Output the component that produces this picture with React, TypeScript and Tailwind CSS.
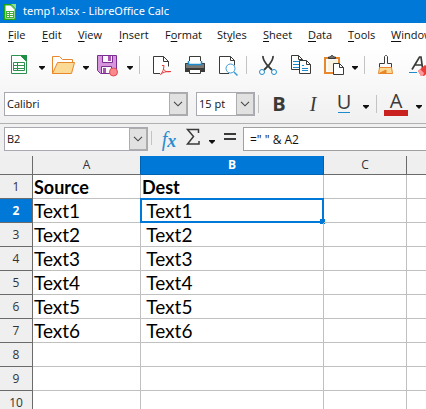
import clsx from 'clsx';
import type { ReactNode } from 'react';

const menus = [
  { label: 'File', key: 0, width: 'w-[34px]' },
  { label: 'Edit', key: 0, width: 'w-9' },
  { label: 'View', key: 0, width: 'w-[41px]' },
  { label: 'Insert', key: 0, width: 'w-[46px]' },
  { label: 'Format', key: 1, width: 'w-[52px]' },
  { label: 'Styles', key: 2, width: 'w-[46px]' },
  { label: 'Sheet', key: 0, width: 'w-[45px]' },
  { label: 'Data', key: 0, width: 'w-10' },
  { label: 'Tools', key: 0, width: 'w-[43px]' },
  { label: 'Window', key: 0, width: 'w-14' },
];

const columns = ['A', 'B', 'C', 'D'];

const rows = [
  ['Source', 'Dest'],
  ['Text1', ' Text1'],
  ['Text2', ' Text2'],
  ['Text3', ' Text3'],
  ['Text4', ' Text4'],
  ['Text5', ' Text5'],
  ['Text6', ' Text6'],
  [],
  [],
  [],
];

const selected = { row: 1, col: 1 };

function Icon({ children }: { children: ReactNode }) {
  return (
    <svg viewBox="0 0 24 24" className="w-6 h-6 block" fill="none" aria-hidden="true">
      {children}
    </svg>
  );
}

function ToolButton({ label, children }: { label: string; children: ReactNode }) {
  return (
    <button type="button" aria-label={label} className="w-6 h-6 shrink-0 flex items-center justify-center">
      {children}
    </button>
  );
}

function Arrow({ label, className = 'w-5' }: { label: string; className?: string }) {
  return (
    <button type="button" aria-label={label} className={clsx('h-6 shrink-0 flex items-center justify-center', className)}>
      <svg viewBox="0 0 6 4" className="w-[6px] h-1 mt-1.5" aria-hidden="true">
        <path d="M0 0h6v1L3 4 0 1z" fill="#111" />
      </svg>
    </button>
  );
}

function Separator({ className }: { className?: string }) {
  return <div className={clsx('w-px shrink-0 bg-[#c3c3c3]', className)} />;
}

function DropButton({ label }: { label: string }) {
  return (
    <button
      type="button"
      aria-label={label}
      className="w-[18px] shrink-0 flex items-center justify-center bg-[#e1e1e1] border border-[#adadad]"
    >
      <svg viewBox="0 0 10 6" className="w-[10px] h-[6px]" fill="none" aria-hidden="true">
        <path d="M1 .8l4 4 4-4" stroke="#444" strokeWidth="1.1" />
      </svg>
    </button>
  );
}

function ComboBox({ label, value, className }: { label: string; value: string; className: string }) {
  return (
    <div className={clsx('h-6 shrink-0 flex bg-white border border-[#a9a9b1]', className)}>
      <input aria-label={label} defaultValue={value} className="flex-1 min-w-0 pl-[2px] bg-transparent outline-none" />
      <DropButton label={label + ' list'} />
    </div>
  );
}

function TitleBar() {
  return (
    <header className="h-[23px] shrink-0 flex items-center gap-[7px] pl-1 bg-[#0078d7] text-white">
      <svg viewBox="0 0 12 16" className="w-3 h-4" fill="none" aria-hidden="true">
        <path d="M0 0h7l5 5v11H0z" fill="#18a303" />
        <path d="M1 1h6l4 4v10H1z" fill="#fff" />
        <path d="M1 1h5.500l4.500 4.500V15H1z" stroke="#2dac27" />
        <path d="M7 0h5v5z" fill="#92e285" />
        <path d="M2 7h8v7H2z" fill="#43b135" />
        <path d="M3 8h2v1H3zM6 8h3v1H6zM3 10h2v1H3zM6 10h3v1H6zM3 12h2v1H3zM6 12h3v1H6z" fill="#fff" />
      </svg>
      <h1 className="whitespace-nowrap font-['Noto_Sans',sans-serif]">temp1.xlsx - LibreOffice Calc</h1>
    </header>
  );
}

function MenuBar() {
  return (
    <nav className="h-6 shrink-0 flex items-center pl-2 bg-white">
      {menus.map(({ label, key, width }) => (
        <button key={label} type="button" className={clsx('shrink-0 text-left', width)}>
          {label.slice(0, key)}
          <span className="underline underline-offset-2">{label[key]}</span>
          {label.slice(key + 1)}
        </button>
      ))}
    </nav>
  );
}

function StandardToolbar() {
  return (
    <div className="h-10 shrink-0 flex items-center pl-2 pb-1">
      <ToolButton label="New">
        <Icon>
          <path d="M3.500 2.500h9l6 6v12h-15z" fill="#fff" stroke="#2f9150" />
          <path d="M12 2h7v7z" fill="#1d9046" />
          <path d="M5.500 9.500h11v8h-11zM9.500 9.500v8M5.500 12.500h11M5.500 15.500h11" stroke="#2f9150" />
        </Icon>
      </ToolButton>
      <Arrow label="New options" />
      <ToolButton label="Open">
        <Icon>
          <path d="M.5 20.500v-17h7l3 3h10v3" fill="#fff" stroke="#e8872b" />
          <path d="M5.500 9.500h17l-3 11H.5z" fill="#fada94" stroke="#e8872b" />
        </Icon>
      </ToolButton>
      <Arrow label="Open options" />
      <ToolButton label="Save">
        <Icon>
          <path d="M1.500 2.500h19v18h-16l-3-3z" fill="#d795dc" stroke="#7b2f92" />
          <path d="M6.500 2.500h10v7h-10z" fill="#fafafa" stroke="#7b2f92" />
          <path d="M12 3h3v5h-3z" fill="#a954b5" />
          <path d="M5.500 13.500h10v7h-10z" fill="#fafafa" stroke="#7b2f92" />
          <path d="M7 15h3v5H7z" fill="#a954b5" />
          <circle cx="17.500" cy="19" r="4" fill="#fb8a8d" stroke="#dd4c55" />
        </Icon>
      </ToolButton>
      <Arrow label="Save options" className="w-[19px]" />
      <Separator className="h-[18px]" />
      <div className="flex gap-[9px] ml-[10px]">
        <ToolButton label="Export as PDF">
          <Icon>
            <path d="M10 20.500H3.500v-17h10l5 5v5M13.500 3.500v5h5" fill="#fff" stroke="#3a3a38" />
            <path d="M12 12.500h2l-.5 3.500c1 2 3 3.500 7.500 2.500M13.500 16c-.5 2-1.500 4-3 5.500M10.500 21.500c2-2 6-3.500 10-3" stroke="#e8393c" />
          </Icon>
        </ToolButton>
        <ToolButton label="Print">
          <Icon>
            <path d="M6.500 10.500v-7h11v7" fill="#fff" stroke="#3a3a38" />
            <path d="M2 10h20v9H2z" fill="#797774" />
            <path d="M2.500 18.500v-8h19v8" stroke="#3a3a38" />
            <path d="M5.500 8v3.500h13V8" fill="#fff" stroke="#1e8bcd" strokeWidth="1.500" />
            <path d="M2 15h20v4H2z" fill="#3a3a38" />
            <path d="M6.500 16.500h11v4h-11z" fill="#fff" stroke="#3a3a38" />
          </Icon>
        </ToolButton>
        <ToolButton label="Print Preview">
          <Icon>
            <path d="M13 20.500H3.500v-17h11l4 4v5M14.500 3.500v4h4" fill="#fff" stroke="#3a3a38" />
            <circle cx="14.500" cy="15.500" r="4.500" fill="#fff" stroke="#3b9bd5" />
            <path d="M18 19l3.500 3.500" stroke="#3b9bd5" strokeWidth="1.500" />
          </Icon>
        </ToolButton>
      </div>
      <Separator className="h-[18px] ml-[6px]" />
      <div className="flex gap-[9px] ml-[9px]">
        <ToolButton label="Cut">
          <Icon>
            <path d="M7 3c-.5 3 1 5 4 9l5 5M17 3c.5 3-1 5-4 9l-5 5" stroke="#3a3a38" strokeWidth="1.800" />
            <circle cx="6" cy="19" r="2.500" fill="#fff" stroke="#1e8bcd" />
            <circle cx="18" cy="19" r="2.500" fill="#fff" stroke="#1e8bcd" />
          </Icon>
        </ToolButton>
        <ToolButton label="Copy">
          <Icon>
            <path d="M2.500 2.500h7l4 4v10h-11zM9.500 2.500v4h4" fill="#fff" stroke="#3a3a38" />
            <path d="M4 8.500h6M4 11.500h6M4 14.500h6" stroke="#1e8bcd" />
            <path d="M10.500 7.500h7l4 4v9h-11zM17.500 7.500v4h4" fill="#fff" stroke="#3a3a38" />
            <path d="M13 12.500h2M13 15.500h6M13 17.500h6" stroke="#1e8bcd" />
          </Icon>
        </ToolButton>
        <ToolButton label="Paste">
          <Icon>
            <path d="M3 5h14v15H3z" fill="#fafafa" stroke="#e8872b" strokeWidth="2" />
            <path d="M6 7h9v11H6z" fill="#fbf3df" />
            <path d="M6.500 5.500V4h2c0-2 3-2 3 0h2v1.500z" fill="#797774" stroke="#3a3a38" />
            <path d="M11.500 10.500h6l4 4v7h-10zM17.500 10.500v4h4" fill="#fff" stroke="#3a3a38" />
          </Icon>
        </ToolButton>
      </div>
      <Arrow label="Paste options" className="w-[18px]" />
      <Separator className="h-[18px]" />
      <div className="flex gap-[9px] ml-[9px]">
        <ToolButton label="Clone Formatting">
          <Icon>
            <path d="M10.500 10.500v-7l1-1h1l1 1v7h4v4h-12v-4z" fill="#fafafa" stroke="#3a3a38" />
            <path d="M5.500 14.500h12l1 6h-14z" fill="#fada94" stroke="#e8872b" />
            <path d="M6 20l6-3v3z" fill="#e8872b" stroke="#e8872b" />
          </Icon>
        </ToolButton>
        <ToolButton label="Clear Direct Formatting">
          <Icon>
            <path d="M5 16.500L12.500 4H14l1.500 11M8 12H15" stroke="#3a3a38" strokeWidth="1.700" />
            <path d="M2 19.500h8" stroke="#1e8bcd" />
            <path d="M11 18l7-6 6 5-7 6h-3z" fill="#ed3d3b" />
            <path d="M11 18l2-2 4 4-1 3h-2z" fill="#fb9a9b" />
          </Icon>
        </ToolButton>
      </div>
    </div>
  );
}

function FormattingToolbar() {
  return (
    <div className="h-9 shrink-0 flex items-center pl-1 pb-[2px]">
      <ComboBox label="Font Name" value="Calibri" className="w-46" />
      <ComboBox label="Font Size" value="15 pt" className="w-[59px] ml-2" />
      <Separator className="h-[18px] ml-[3px]" />
      <div className="flex ml-2 text-xl leading-6 text-[#3a3a38]">
        <button type="button" aria-label="Bold" className="w-6 font-bold">B</button>
        <button type="button" aria-label="Italic" className="w-6 ml-[10px] italic font-['Liberation_Serif',serif]">I</button>
        <button type="button" aria-label="Underline" className="w-6 ml-[7px] flex justify-center">
          <span className="w-3 h-[21px] flex justify-center border-b border-[#1e8bcd] leading-5 font-medium">U</span>
        </button>
      </div>
      <Arrow label="Underline options" className="w-5" />
      <Separator className="h-[18px]" />
      <button type="button" aria-label="Font Color" className="w-6 h-6 ml-[7px] shrink-0 flex flex-col items-center">
        <span className="h-[18px] text-xl leading-[18px] font-medium text-[#3a3a38]">A</span>
        <span className="w-6 h-[6px] bg-[#c9211e]" />
      </button>
      <Arrow label="Font Color options" className="w-[22px]" />
    </div>
  );
}

function FormulaBar() {
  return (
    <div className="h-[33px] shrink-0 flex items-start pt-[3px] pl-1 bg-[#f0f0f0] border-t border-[#b0b0b0]">
      <ComboBox label="Name Box" value="B2" className="w-36" />
      <Separator className="h-[14px] mt-1 ml-[3px]" />
      <div className="flex ml-[5px]">
        <ToolButton label="Function Wizard">
          <span className="flex items-end font-['Liberation_Serif',serif] italic text-[#2a8dcf]">
            <span className="text-xl leading-6">f</span>
            <span className="text-lg leading-5 font-bold">x</span>
          </span>
        </ToolButton>
        <ToolButton label="Select Function">
          <Icon>
            <path d="M17.500 6V2.500h-11l6 7-6 7.500h11.500v-3" stroke="#3a3a38" strokeWidth="1.500" />
          </Icon>
        </ToolButton>
      </div>
      <Arrow label="Function options" className="w-[14px]" />
      <ToolButton label="Formula">
        <Icon>
          <path d="M5 7h12M5 12h12" stroke="#3a3a38" strokeWidth="2" />
        </Icon>
      </ToolButton>
      <input
        aria-label="Input line"
        defaultValue={'=" " & A2'}
        className="flex-1 min-w-0 h-6 pl-[6px] bg-white border border-r-0 border-[#a0a0a0] text-xs outline-none"
      />
    </div>
  );
}

function Sheet() {
  return (
    <table className="w-full table-fixed border-separate border-spacing-0 text-xs">
      <colgroup>
        <col className="w-[33px]" />
        <col className="w-[108px]" />
        <col className="w-[183px]" />
        <col className="w-[83px]" />
        <col />
      </colgroup>
      <thead>
        <tr className="h-[19px] bg-[#efefef] text-[#333]">
          <th aria-label="Select all" className="p-0 border-r border-b border-[#6b6b6b]" />
          {columns.map((name, i) => (
            <th
              key={name}
              scope="col"
              className={clsx(
                'p-0 border-b border-r last:border-r-0 leading-4',
                i === selected.col
                  ? 'bg-[#0078d7] text-white font-bold border-[#0063b1]'
                  : 'font-normal border-b-[#6b6b6b]',
                i === 0 && 'border-r-[#0063b1]',
                i > 1 && 'border-r-[#6b6b6b]',
              )}
            >
              {i < 3 && name}
            </th>
          ))}
        </tr>
      </thead>
      <tbody>
        {rows.map((row, r) => (
          <tr key={r} className="h-6">
            <th
              scope="row"
              className={clsx(
                'p-0 border-r border-b border-[#6b6b6b] leading-4',
                r === selected.row ? 'bg-[#0078d7] text-white font-bold' : 'bg-[#efefef] text-[#333] font-normal',
              )}
            >
              {r + 1}
            </th>
            {columns.map((name, c) => (
              <td
                key={name}
                className={clsx(
                  "relative p-0 pl-px border-r last:border-r-0 border-b border-[#c0c0c0] font-['Lato','Open_Sans',sans-serif] leading-[22px] text-black whitespace-pre",
                  r === 0 ? 'text-lg font-bold' : 'text-[19px]',
                )}
              >
                {row[c]}
                {r === selected.row && c === selected.col && (
                  <div className="absolute -top-px -left-px -right-px -bottom-px border-2 border-[#0078d7]">
                    <div className="absolute -right-[3px] -bottom-[3px] w-[5px] h-[5px] bg-[#0078d7]" />
                  </div>
                )}
              </td>
            ))}
          </tr>
        ))}
      </tbody>
    </table>
  );
}

export default function App() {
  return (
    <div className="h-screen overflow-hidden flex flex-col bg-white font-['Open_Sans','Noto_Sans',sans-serif] text-[11px] text-[#111]">
      <TitleBar />
      <MenuBar />
      <div className="shrink-0 bg-linear-to-b from-white to-[#f0f0f0]">
        <StandardToolbar />
        <FormattingToolbar />
      </div>
      <FormulaBar />
      <main className="flex-1 min-h-0 overflow-hidden">
        <Sheet />
      </main>
    </div>
  );
}
